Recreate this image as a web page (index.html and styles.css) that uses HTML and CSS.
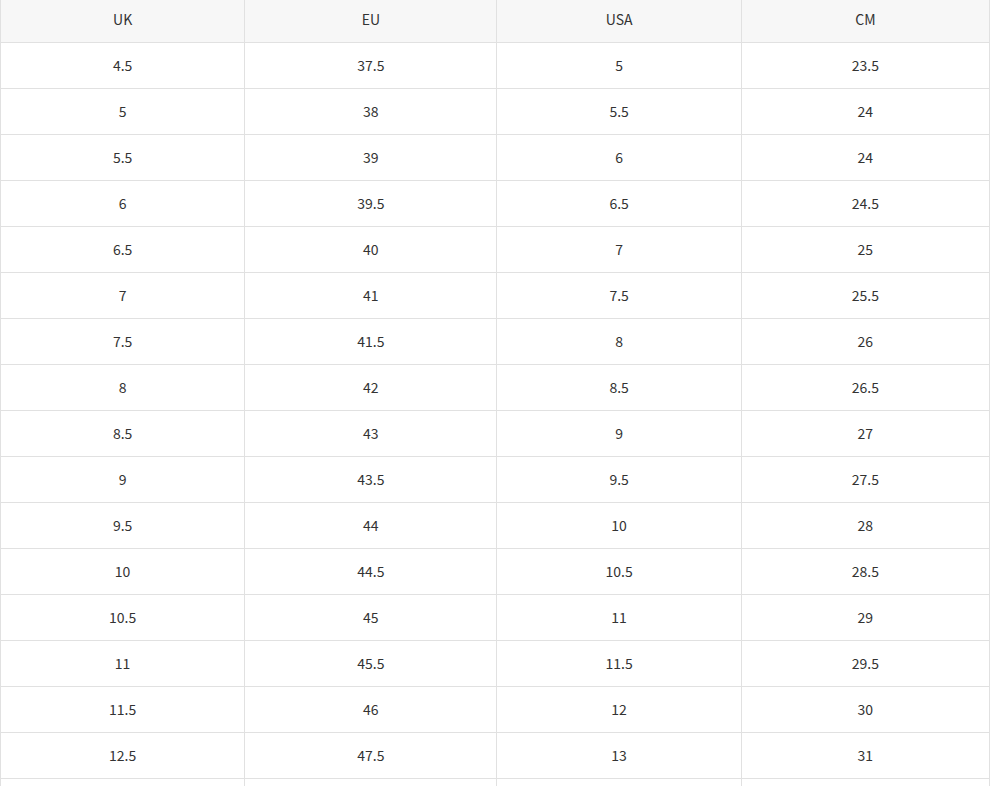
FILE: index.html
```html
<!DOCTYPE html>
<html lang="en">
<head>
<meta charset="utf-8">
<title>Size chart</title>
<link rel="stylesheet" href="styles.css">
</head>
<body>
<table class="size-table">
  <colgroup>
    <col class="c1"><col class="c2"><col class="c3"><col class="c4">
  </colgroup>
  <thead>
    <tr><th>UK</th><th>EU</th><th>USA</th><th>CM</th></tr>
  </thead>
  <tbody>
    <tr><td>4.5</td><td>37.5</td><td>5</td><td>23.5</td></tr>
    <tr><td>5</td><td>38</td><td>5.5</td><td>24</td></tr>
    <tr><td>5.5</td><td>39</td><td>6</td><td>24</td></tr>
    <tr><td>6</td><td>39.5</td><td>6.5</td><td>24.5</td></tr>
    <tr><td>6.5</td><td>40</td><td>7</td><td>25</td></tr>
    <tr><td>7</td><td>41</td><td>7.5</td><td>25.5</td></tr>
    <tr><td>7.5</td><td>41.5</td><td>8</td><td>26</td></tr>
    <tr><td>8</td><td>42</td><td>8.5</td><td>26.5</td></tr>
    <tr><td>8.5</td><td>43</td><td>9</td><td>27</td></tr>
    <tr><td>9</td><td>43.5</td><td>9.5</td><td>27.5</td></tr>
    <tr><td>9.5</td><td>44</td><td>10</td><td>28</td></tr>
    <tr><td>10</td><td>44.5</td><td>10.5</td><td>28.5</td></tr>
    <tr><td>10.5</td><td>45</td><td>11</td><td>29</td></tr>
    <tr><td>11</td><td>45.5</td><td>11.5</td><td>29.5</td></tr>
    <tr><td>11.5</td><td>46</td><td>12</td><td>30</td></tr>
    <tr><td>12.5</td><td>47.5</td><td>13</td><td>31</td></tr>
    <tr><td>13.5</td><td>48.5</td><td>14</td><td>32</td></tr>
  </tbody>
</table>
</body>
</html>
```

FILE: styles.css
```css
html, body {
  margin: 0;
  padding: 0;
  background: #ffffff;
}

.size-table {
  border-collapse: collapse;
  table-layout: fixed;
  width: 990px;
  font-family: "Noto Sans CJK KR", "Open Sans", sans-serif;
  font-size: 14px;
  color: #333333;
}

.c1 { width: 244px; }
.c2 { width: 252px; }
.c3 { width: 244px; }
.c4 { width: 248px; }

.size-table th,
.size-table td {
  border: 1px solid #e1e1e1;
  text-align: center;
  padding: 0;
  font-weight: 400;
  line-height: 20px;
}

.size-table thead th {
  background: #f7f7f7;
  height: 38px;
  padding-bottom: 4px;
  border-top: none;
}

.size-table td {
  height: 43px;
  padding-bottom: 2px;
}
```
